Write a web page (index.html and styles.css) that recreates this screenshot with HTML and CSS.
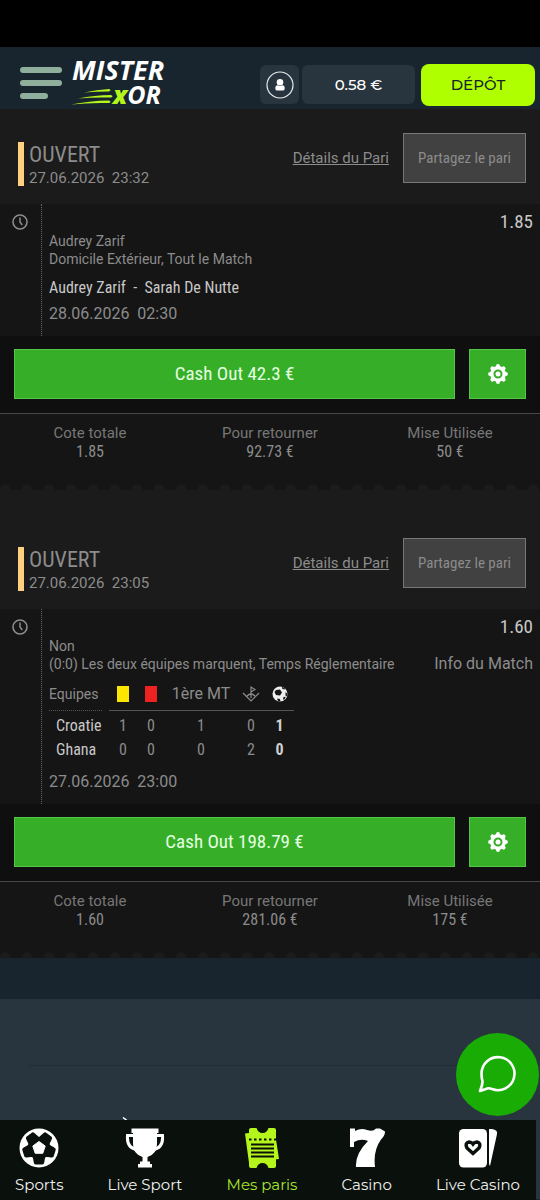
FILE: index.html
```html
<!DOCTYPE html>
<html lang="fr">
<head>
<meta charset="utf-8">
<meta name="viewport" content="width=device-width, initial-scale=1">
<title>Mister xOR - Mes paris</title>
<link rel="stylesheet" href="styles.css">
</head>
<body>
<svg class="defs" aria-hidden="true">
  <symbol id="clock" viewBox="0 0 16 16"><circle cx="8" cy="8" r="7" fill="none" stroke="currentColor" stroke-width="1.6"/><path d="M8 3.5V8l2.3 3" fill="none" stroke="currentColor" stroke-width="1.5"/></symbol>
  <symbol id="gear" viewBox="-10 -10 20 20"><g fill="none" stroke="currentColor"><circle r="6.2" stroke-width="3.4"/><path stroke-width="4" stroke-linecap="round" d="M0-7.900v.8M0 7.900v-.8M-7.900 0h.8M7.900 0h-.8M-5.600-5.600l.6.6M5.600-5.600l-.6.6M-5.600 5.600l.6-.6M5.600 5.600l-.6-.6"/></g><circle r="2.500" fill="currentColor"/></symbol>
</svg>
<div class="status-bar"></div>
<header class="header">
  <button class="menu" aria-label="Menu"><span></span><span></span><span></span></button>
  <a class="logo" href="#" aria-label="Mister xOR">
    <span class="logo-top">MISTER</span>
    <span class="logo-bottom">
      <svg width="42" height="16" viewBox="0 0 42 16" aria-hidden="true"><g fill="#b4f61c"><path d="M13 3.500Q26 .5 38 0q3 1.200 0 2.400Q25 2.400 13 3.500Z"/><path d="M7 9.500Q24 6 40 6q3 1.400 0 2.600Q24 8 7 9.500Z"/><path d="M0 15.500Q18 11.600 38 11.400q3 1.400 0 2.600Q18 13.500 0 15.500Z"/></g></svg><span class="logo-word"><b>x</b>OR</span>
    </span>
  </a>
  <div class="account">
    <button class="profile" aria-label="Profil"><svg width="28" height="28" viewBox="0 0 28 28"><circle cx="14" cy="14" r="13" fill="none" stroke="#e8edf0" stroke-width="1.200"/><circle cx="14" cy="11.200" r="3.300" fill="#fff"/><path d="M9.300 17.200q0-3 2.500-3 2.200 1.500 4.400 0 2.500 0 2.500 3 0 2.400-1.500 2.400h-6.400q-1.500 0-1.500-2.400Z" fill="#fff"/></svg></button>
    <button class="balance">0.58 €</button>
    <button class="deposit">DÉPÔT</button>
  </div>
</header>
<main>
  <article class="ticket">
    <div class="ticket-head">
      <div class="state"><h2>OUVERT</h2><time>27.06.2026&nbsp; 23:32</time></div>
      <a class="details" href="#">Détails du Pari</a>
      <button class="share">Partagez le pari</button>
    </div>
    <section class="selection">
      <svg class="clock" width="16" height="16"><use href="#clock"/></svg>
      <div class="pick">
        <p>Audrey Zarif</p>
        <p>Domicile Extérieur, Tout le Match</p>
        <p class="match">Audrey Zarif&nbsp; -&nbsp; Sarah De Nutte</p>
        <time class="kickoff">28.06.2026&nbsp; 02:30</time>
      </div>
      <div class="side"><span class="odds">1.85</span></div>
    </section>
    <div class="actions">
      <button class="cashout">Cash Out 42.3 €</button>
      <button class="settings" aria-label="Paramètres"><svg width="20" height="20"><use href="#gear"/></svg></button>
    </div>
    <dl class="totals">
      <div><dt>Cote totale</dt><dd>1.85</dd></div>
      <div><dt>Pour retourner</dt><dd>92.73 €</dd></div>
      <div><dt>Mise Utilisée</dt><dd>50 €</dd></div>
    </dl>
  </article>
  <article class="ticket">
    <div class="ticket-head">
      <div class="state"><h2>OUVERT</h2><time>27.06.2026&nbsp; 23:05</time></div>
      <a class="details" href="#">Détails du Pari</a>
      <button class="share">Partagez le pari</button>
    </div>
    <section class="selection">
      <svg class="clock" width="16" height="16"><use href="#clock"/></svg>
      <div class="pick">
        <p>Non</p>
        <p>(0:0) Les deux équipes marquent, Temps Réglementaire</p>
        <table class="score">
          <thead><tr>
            <th class="teams">Equipes</th><th class="space"></th>
            <th class="card"><i class="yellow"></i></th>
            <th class="card"><i class="red"></i></th>
            <th class="half">1ère MT</th>
            <th class="corner"><svg width="18" height="18" viewBox="0 0 18 18" fill="none" stroke="#8c8c8c" stroke-width="1.200"><path d="M9 13V2l4 2.500L9 7M1 8l8 8 8-8M5 11q4-4 8 0"/></svg></th>
            <th class="goals"><svg width="16" height="16" viewBox="0 0 16 16"><circle cx="8" cy="8" r="7.500" fill="#eee"/><path fill="#161616" d="m4 4 4-.5 2 3-2 3-4-.5L2.500 6ZM10 .8l3.500 2.200-1.500.5-2-1ZM13.500 6l2 2-.8 2.500-1.200-1ZM5 12.500l3 .5.500 2.500-2.500-.4ZM11.500 11l2.300-.3-1.500 3-1.300-.5Z"/></svg></th>
          </tr></thead>
          <tbody>
            <tr><th>Croatie</th><td></td><td>1</td><td>0</td><td>1</td><td>0</td><td class="goal">1</td></tr>
            <tr><th>Ghana</th><td></td><td>0</td><td>0</td><td>0</td><td>2</td><td class="goal">0</td></tr>
          </tbody>
        </table>
        <time class="kickoff">27.06.2026&nbsp; 23:00</time>
      </div>
      <div class="side"><span class="odds">1.60</span><a class="info" href="#">Info du Match</a></div>
    </section>
    <div class="actions">
      <button class="cashout">Cash Out 198.79 €</button>
      <button class="settings" aria-label="Paramètres"><svg width="20" height="20"><use href="#gear"/></svg></button>
    </div>
    <dl class="totals">
      <div><dt>Cote totale</dt><dd>1.60</dd></div>
      <div><dt>Pour retourner</dt><dd>281.06 €</dd></div>
      <div><dt>Mise Utilisée</dt><dd>175 €</dd></div>
    </dl>
  </article>
</main>
<footer class="footer">
  <hr>
  <svg class="accent" width="8" height="4" viewBox="0 0 8 4" aria-hidden="true"><path d="m1 .5 4 3" stroke="#fff" stroke-width="1.500"/></svg>
</footer>
<button class="chat" aria-label="Discussion"><svg width="42" height="42" viewBox="0 0 42 42" fill="none" stroke="#fff" stroke-width="2.600" stroke-linejoin="round"><path d="M4.500 19.500A16.500 16.500 0 1 1 15 35q-4-1.500-6 0l-6 2q2.500-6 2.500-9.500-1-4-1-8Z"/></svg></button>
<nav class="nav">
  <a href="#"><svg width="40" height="40" viewBox="-20 -20 40 40"><circle r="19.500" fill="#fff"/><g fill="#0a100b"><path id="ball-lobe" d="M0 0-8.500 7Q-6 8-5.500 13q.5 3.500 2 3.500h7q1.500 0 2-3.500.5-5 3-6Z"/><use href="#ball-lobe" transform="rotate(72)"/><use href="#ball-lobe" transform="rotate(144)"/><use href="#ball-lobe" transform="rotate(216)"/><use href="#ball-lobe" transform="rotate(288)"/></g><path fill="#fff" stroke="#fff" stroke-linejoin="round" d="m0-6.500 6.200 4.500-2.400 7.300h-7.600l-2.400-7.300Z"/></svg><span>Sports</span></a>
  <a href="#"><svg width="40" height="40" viewBox="0 0 40 40"><path fill="none" stroke="#fff" stroke-width="3" d="M8 7.500H2.500q-1 13 10 14M32 7.500h5.500q1 13-10 14"/><path fill="#fff" d="M6.500.5h27V5H32v11q0 10-9.500 13v4.500H25V36h2v3.500H13V36h2v-2.500h2.500V29Q8 26 8 16V5H6.500Z"/></svg><span>Live Sport</span></a>
  <a class="active" href="#"><svg width="40" height="40" viewBox="0 0 40 40"><path fill="#b4f61c" d="m3 5.500 4-.5v30ZM37 31l-4 .5V5Z"/><path fill="#b4f61c" d="M9 0h5.500q1.500 5 6 5t6-5H32q2 0 2 2v36q0 2-2 2h-5.500q-1.500-5-6-5t-6 5H9q-2 0-2-2V2q0-2 2-2Z"/><g stroke="#0a100b" stroke-width="2"><path stroke-dasharray="2.500 2.500" d="M7 11.500h27"/><path d="M9 16.500h23M9 20.500h23M9 24.500h23M9 28.500h23"/></g></svg><span>Mes paris</span></a>
  <a href="#"><svg width="40" height="40" viewBox="0 0 40 40"><path fill="#fff" d="M3 .5h5V3q6-3.500 12-1 6 2 9-1.500h4l5 3q0 4-4 8-8 11-6 27.500H9q-1-13 12-26-7-3-14 1v5H3Z"/></svg><span>Casino</span></a>
  <a href="#"><svg width="40" height="40" viewBox="0 0 40 40"><rect x="1" y="1" width="28" height="38.500" rx="4.500" fill="#fff"/><path fill="#fff" d="M31 1h3q6 1 5 5L32 38q-1-1-1-3Z"/><path fill="#fff" stroke="#0a100b" stroke-width="3.500" d="M15 25.500 9 20q-2.500-5 2-6 2.500 0 4 2 1.500-2 4-2 4.500 1 2 6Z"/></svg><span>Live Casino</span></a>
</nav>
</body>
</html>
```
FILE: styles.css
```css
:root {
  --narrow: "Roboto Condensed", "Liberation Sans Narrow", Roboto, sans-serif;
  --wide: Montserrat, Inter, sans-serif;
}
* { box-sizing: border-box; }
body { margin: 0; background: #18242e; color: #8c8c8c; font: 15px/18px Roboto, sans-serif; }
button { border: 0; padding: 0; font: inherit; color: inherit; cursor: pointer; }
a { color: inherit; text-decoration: none; }
h2, p, dl, dd { margin: 0; }
.defs { position: absolute; width: 0; height: 0; }
.status-bar { height: 47px; background: #000; }

.header { display: flex; align-items: center; height: 62px; padding: 0 5px 0 20px; background: #18242e; }
.menu { display: flex; flex-direction: column; gap: 7px; width: 42px; margin-top: 10px; background: none; }
.menu span { height: 6px; border-radius: 3px; background: #8fae9b; }
.menu span:last-child { width: 28px; }
.logo { display: flex; flex-direction: column; margin: 8px 0 0 9px; color: #fff; font: italic 700 27px/24px "Open Sans", sans-serif; }
.logo-top { padding-left: 1px; }
.logo-bottom { display: flex; align-items: center; font-size: 25px; }
.logo-bottom svg { margin-top: 6px; }
.logo b { color: #b4f61c; }
.account { display: flex; align-items: center; gap: 3px; margin: 13px 0 0 auto; font: 500 15px/20px var(--wide); color: #fff; }
.profile, .balance { height: 39px; border-radius: 6px; background: #28343e; }
.profile { display: grid; place-items: center; width: 39px; }
.balance { width: 113px; }
.deposit { width: 114px; height: 42px; margin-left: 3px; border-radius: 8px; background: #b0ff00; color: #17242b; }

.ticket { background: #1b1b1b; }
.ticket + .ticket { padding-top: 24px; }
.ticket-head { display: flex; align-items: center; height: 95px; padding: 2px 14px 0 18px; }
.state { height: 44px; margin-top: 12px; margin-right: auto; padding-left: 5px; border-left: 6px solid #ffd07f; }
.state h2 { font: 400 22px/25px var(--narrow); }
.state time { display: block; line-height: 22px; }
.details { margin-right: 14px; text-decoration: underline; }
.share { width: 123px; height: 50px; border: 1px solid #777; background: #414141; font: 15px/20px var(--narrow); }

.selection { display: flex; background: #151515; }
.clock { width: 16px; height: 16px; margin: 10px 13px 0 12px; flex: none; }
.pick { flex: 1; min-width: 0; padding: 28px 0 12px 7px; border-left: 1px dotted #666; font-size: 14px; }
.pick p { line-height: 18px; white-space: nowrap; }
.pick .match { margin-top: 11px; color: #c8c8c8; font: 16px/18px var(--narrow); }
.kickoff { display: block; margin-top: 7px; font-size: 16px; line-height: 20px; }
.side { display: flex; flex-direction: column; align-items: flex-end; gap: 16px; padding: 6px 7px 0 0; }
.odds { color: #c8c8c8; font: 19px/24px var(--narrow); }
.info { font-size: 16px; }

.score { margin-top: 6px; border-collapse: collapse; text-align: center; font: 16px/24px var(--narrow); }
.score thead th { height: 31px; padding: 0; border-bottom: 1px solid #555; font: 16px/20px Roboto, sans-serif; }
.score thead .teams { width: 53px; border-bottom-style: dotted; text-align: left; font-size: 14px; }
.score thead .space { width: 7px; border: 0; }
.score .card { width: 28px; }
.score .half { width: 72px; }
.score .corner { width: 28px; }
.score .goals { width: 29px; }
.score svg { display: block; margin: auto; }
.score i { display: block; width: 12px; height: 16px; margin: auto; }
.yellow { background: #fbe600; }
.red { background: #ef2222; }
.score tbody th, .score td { padding: 0; font-weight: 400; }
.score tbody tr:first-child > * { padding-top: 3px; }
.score tbody th { padding-left: 7px; color: #c8c8c8; text-align: left; }
.score .goal { color: #d0d0d0; font-weight: 700; }
.score + .kickoff { margin-top: 10px; }

.actions { display: flex; gap: 14px; padding: 13px 14px 14px; background: #0f0f0f; border-bottom: 1px solid #484848; }
.cashout, .settings { height: 50px; border: 1px solid #55c548; background: #36ae27; color: #e4ffe0; }
.cashout { flex: 1; font: 19px/24px var(--narrow); }
.settings { display: grid; place-items: center; width: 57px; color: #fff; }
.totals { display: grid; grid-template-columns: repeat(3, 1fr); padding: 10px 0 28px; background: radial-gradient(circle at 5px 6px, #1b1b1b 5px, transparent 6px) 0 100% / 22px 6px repeat-x #151515; text-align: center; }
.totals dt { color: #777; }
.totals dd { font: 16px/20px var(--narrow); }

.footer { display: flex; flex-direction: column; justify-content: space-between; margin-top: 41px; min-height: 200px; padding: 66px 28px 78px; background: #28343e; }
.footer hr { width: 100%; margin: 0; border: 0; border-top: 1px solid #222d36; }
.accent { margin-left: 94px; }
.chat { position: fixed; right: 1px; bottom: 84px; display: grid; place-items: center; width: 83px; height: 83px; border-radius: 50%; background: #18ac05; }
.nav { position: fixed; left: 0; right: 4px; bottom: 0; display: flex; justify-content: space-between; height: 80px; padding: 8px 16px 0 15px; background: #0a100b; color: #f0f2f0; font: 15px/20px var(--wide); }
.nav a { display: flex; flex-direction: column; align-items: center; gap: 7px; white-space: nowrap; }
.nav .active { color: #a8e52b; }
```
